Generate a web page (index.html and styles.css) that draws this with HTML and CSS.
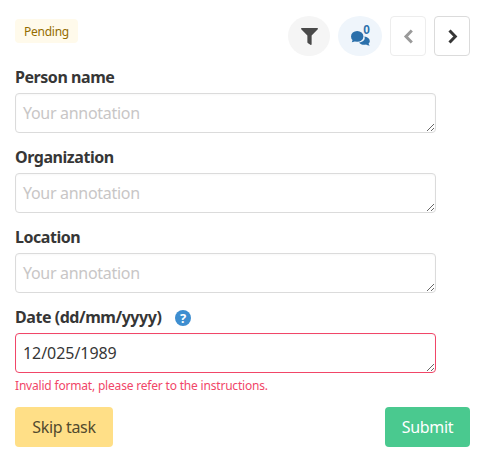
FILE: index.html
```html
<!DOCTYPE html>
<html lang="en">
<head>
<meta charset="utf-8">
<title>Annotation task</title>
<link rel="stylesheet" href="styles.css">
</head>
<body>
<main class="task">
  <header class="top">
    <span class="tag">Pending</span>
    <div class="tools">
      <button class="round grey" type="button" aria-label="Filter">
        <svg width="17" height="17" viewBox="0 0 512 512"><path fill="#4a4a4a" d="M488 0H24C3 0-8 26 7 41l185 185v206c0 8 4 15 10 20l80 56c16 11 38 0 38-20V226L505 41c15-15 4-41-17-41z"/></svg>
      </button>
      <button class="round blue" type="button" aria-label="Comments">
        <svg class="bubbles" width="19" height="15" viewBox="0 0 19 15"><ellipse cx="6.200" cy="5.400" rx="6.200" ry="5.400" fill="#2b70ab"/><path fill="#2b70ab" d="M.8 11.200c1.600 0 2.800-.6 3.600-1.600L2 8z"/><path fill="#2b70ab" d="M13.400 5.600c3 .4 5.400 2 5.400 4.300 0 1-.5 1.900-1.200 2.600.1.900.6 1.500 1.200 2-1.500 0-2.800-.4-3.700-1.100-.7.200-1.300.3-2 .3-2.200 0-4-.9-5-2.300 3.800-.2 6.600-2.600 5.300-5.800z"/></svg>
        <span class="count">0</span>
      </button>
      <button class="nav faded" type="button" aria-label="Previous">
        <svg width="11" height="15" viewBox="0 0 11 15"><path d="M8.800 1.500 3 7.500l5.800 6" fill="none" stroke="#9a9a9a" stroke-width="3"/></svg>
      </button>
      <button class="nav" type="button" aria-label="Next">
        <svg width="11" height="15" viewBox="0 0 11 15"><path d="m2.500 1.500 5.800 6-5.800 6" fill="none" stroke="#363636" stroke-width="3"/></svg>
      </button>
    </div>
  </header>
  <form class="fields">
    <div class="field">
      <label class="label" for="person">Person name</label>
      <textarea class="input" id="person" placeholder="Your annotation"></textarea>
    </div>
    <div class="field">
      <label class="label" for="org">Organization</label>
      <textarea class="input" id="org" placeholder="Your annotation"></textarea>
    </div>
    <div class="field">
      <label class="label" for="loc">Location</label>
      <textarea class="input" id="loc" placeholder="Your annotation"></textarea>
    </div>
    <div class="field">
      <label class="label" for="date">Date (dd/mm/yyyy)
        <svg class="help" width="16" height="16" viewBox="0 0 16 16"><circle cx="8" cy="8" r="8" fill="#3e8ed0"/><text x="8" y="12.800" class="help-mark">?</text></svg>
      </label>
      <textarea class="input invalid" id="date">12/025/1989</textarea>
      <p class="error">Invalid format, please refer to the instructions.</p>
    </div>
    <div class="actions">
      <button class="btn skip" type="button">Skip task</button>
      <button class="btn submit" type="submit">Submit</button>
    </div>
  </form>
</main>
</body>
</html>
```
FILE: styles.css
```css
* { box-sizing: border-box; }
html, body { margin: 0; background: #fff; }
body {
  font-family: "Noto Sans", "Open Sans", "Liberation Sans", sans-serif;
  color: #363636;
  font-size: 16px;
}
.task { width: 483px; height: 461px; padding: 16px 13px 0 15px; }
.top { display: flex; justify-content: space-between; align-items: flex-start; height: 53px; }
.tag {
  margin-top: 3px;
  height: 24px;
  padding: 0 9px;
  display: flex;
  align-items: center;
  background: #fffaeb;
  color: #946c00;
  font-size: 12px;
  letter-spacing: -0.25px;
  border-radius: 4px;
}
.tools { display: flex; align-items: center; gap: 8px; }
.round {
  position: relative;
  height: 40px;
  border: 0;
  border-radius: 50%;
  display: flex;
  align-items: center;
  justify-content: center;
  padding: 0;
}
.round.grey { background: #f5f5f5; width: 42px; }
.round.blue { background: #eff5fb; width: 44px; }
.round.blue .bubbles { margin-top: 4px; }
.count {
  position: absolute;
  top: 7px;
  right: 12px;
  font-size: 12px;
  font-weight: 600;
  line-height: 14px;
  color: #2b70ab;
  text-shadow: -1px 0 0 #eff5fb, 0 1px 0 #eff5fb;
}
.nav {
  width: 36px;
  height: 40px;
  background: #fff;
  border: 1px solid #dbdbdb;
  border-radius: 4px;
  display: flex;
  align-items: center;
  justify-content: center;
  padding: 0;
}
.nav.faded { border-color: #ededed; }
.fields { display: flex; flex-direction: column; }
.field { margin-bottom: 16px; }
.field:nth-child(4) { margin-bottom: 0; }
.label {
  display: flex;
  align-items: center;
  gap: 14px;
  height: 17px;
  margin-bottom: 7px;
  font-size: 16px;
  font-weight: 700;
  letter-spacing: -0.45px;
  line-height: 17px;
}
.input {
  display: block;
  width: 421px;
  height: 40px;
  min-height: 40px;
  padding: 6px 7px;
  background: #fff;
  border: 1px solid #dbdbdb;
  border-radius: 4px;
  font-family: inherit;
  font-size: 16px;
  letter-spacing: -0.3px;
  line-height: 26px;
  color: #363636;
  outline: none;
  box-shadow: inset 0 1px 2px rgba(10, 10, 10, 0.03);
}
.input::placeholder { color: #c8c6c6; opacity: 1; }
.input.invalid { border-color: #f14668; letter-spacing: -0.05px; }
.help { flex: none; }
.help-mark { fill: #fff; font-size: 13px; font-weight: 700; text-anchor: middle; }
.error {
  margin: 5px 0 0;
  height: 16px;
  font-size: 12px;
  line-height: 16px;
  letter-spacing: -0.19px;
  color: #f14668;
}
.actions { display: flex; justify-content: space-between; margin-top: 13px; width: 455px; }
.btn {
  height: 40px;
  border-radius: 4px;
  border: 0;
  font-family: inherit;
  font-size: 16px;
  letter-spacing: -0.35px;
  padding: 0;
}
.skip { width: 98px; background: #ffdf87; color: #524a2e; }
.submit { width: 85px; background: #4ac98f; color: #fff; }
```
